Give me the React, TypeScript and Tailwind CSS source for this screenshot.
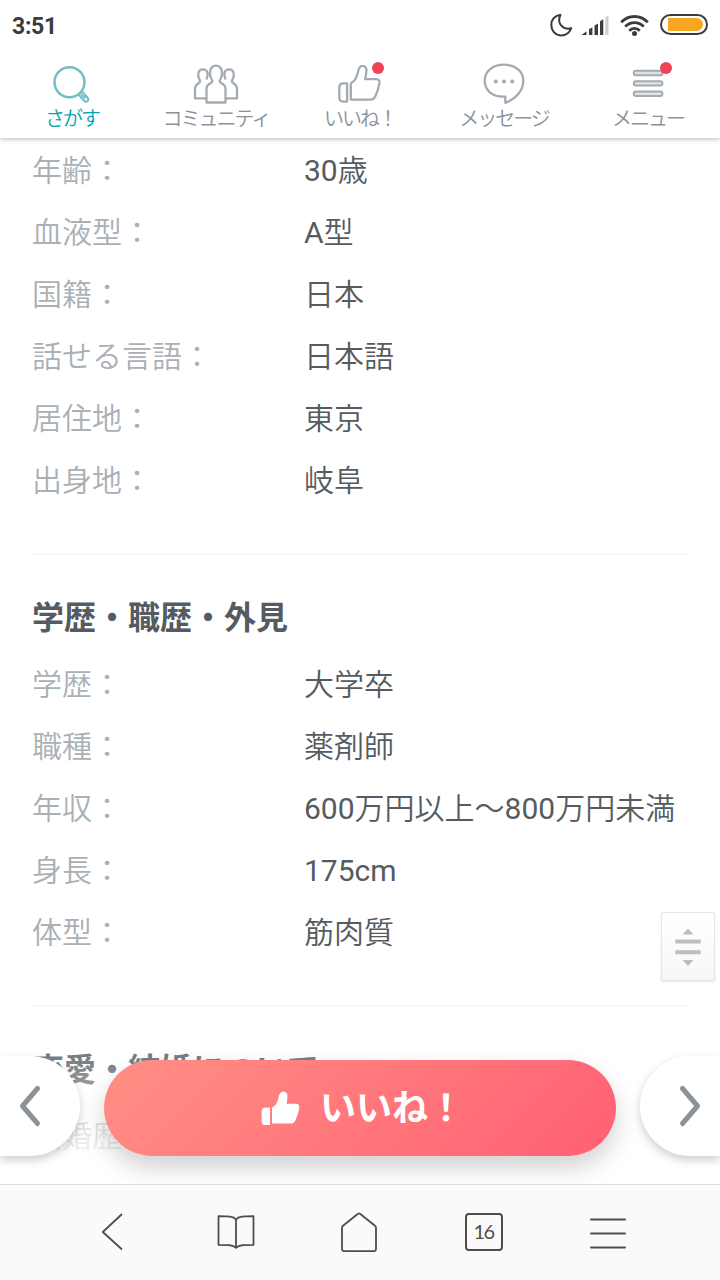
import type { ReactNode } from "react";

const basicRows = [
  { label: "年齢：", value: "30歳" },
  { label: "血液型：", value: "A型" },
  { label: "国籍：", value: "日本" },
  { label: "話せる言語：", value: "日本語" },
  { label: "居住地：", value: "東京" },
  { label: "出身地：", value: "岐阜" },
];

const careerRows = [
  { label: "学歴：", value: "大学卒" },
  { label: "職種：", value: "薬剤師" },
  { label: "年収：", value: "600万円以上〜800万円未満" },
  { label: "身長：", value: "175cm" },
  { label: "体型：", value: "筋肉質" },
];

const HAND =
  "M14.8 39.6V24.2c0-1.4.8-1.8 2-2.4 2.6-1.6 4-5 5-9.4.7-3.8 1.4-6.6 4.6-6.6 3 0 4.4 2.4 4 5.8l-1.2 7.600h11c2.800 0 3.600 1.600 3.200 4.200-.7 4.600-2.200 9-4.200 13.200-1 2.200-2 3-4.200 3z";
const CUFF = "M7.400 23.400h3.700v18.200H7.400c-2.600 0-4.100-1.400-4.100-4v-10.200c0-2.600 1.500-4 4.100-4z";

const StatusBar = () => {
  return (
    <div className="flex h-[52px] items-center justify-between pr-3 pl-3 text-[#3c3c3c]">
      <span className="text-[23px] leading-none font-bold tracking-[-0.3px]">3:51</span>
      <div className="flex items-center pb-[3px]">
        <svg className="h-6 w-6" viewBox="0 0 24 24" fill="none">
          <path
            d="M11.500 1.800C6 2.400 2.300 6.400 2.300 11.800c0 6 4.200 10.700 10 10.700 4.600 0 8.200-2.800 10-7.300-8 2.300-15-4.500-10.800-13.400z"
            stroke="currentColor"
            strokeWidth="2"
            strokeLinejoin="round"
          />
        </svg>
        <svg className="ml-2 h-6 w-[28px]" viewBox="0 0 28 24" fill="currentColor">
          <path d="M.5 22l5-3.800v3.800zM8 16.200l3.400-2V22H8zM13.500 12.500l3.500-2V22h-3.500zM19 8.300l3.300-2V22H19z" />
          <path d="M24.300 4.200L27.500 2v20h-3.200z" fill="#cfcfcf" />
        </svg>
        <svg className="ml-[11px] h-6 w-[29px]" viewBox="0 0 29 24" fill="none">
          <g stroke="currentColor" strokeWidth="2.800">
            <path d="M1.200 9.200C8.800 1.600 20.200 1.600 27.800 9.200" />
            <path d="M5.200 13.600c5.300-5.300 13.300-5.300 18.600 0" />
            <path d="M9.200 17.700c3-3 7.600-3 10.600 0" />
          </g>
          <circle cx="14.500" cy="20.600" r="2.500" fill="currentColor" />
        </svg>
        <div className="ml-[11px] flex h-[21px] w-12 items-center rounded-full border-2 border-[#3c3c3c] pl-1.5">
          <div className="h-[13px] w-[35px] rounded-l-[2px] rounded-r-full bg-[#f6a623]" />
        </div>
      </div>
    </div>
  );
};

type NavItemProps = {
  label: string;
  active?: boolean;
  badge?: boolean;
  children: ReactNode;
};

const NavItem = ({ label, active, badge, children }: NavItemProps) => {
  return (
    <button
      className={`relative flex w-36 flex-col items-center pt-2 ${active ? "text-[#00a5b4]" : "text-[#8b9299]"}`}
    >
      <svg
        className={`h-[46px] w-12 ${active ? "text-[#70bfc6]" : "text-[#a3abb2]"}`}
        viewBox="0 0 48 46"
        fill="none"
        stroke="currentColor"
        strokeWidth="2.300"
        strokeLinejoin="round"
      >
        {children}
      </svg>
      {badge && <span className="absolute top-[10px] left-[84px] h-3 w-3 rounded-full bg-[#ee4456]" />}
      <span className="mt-px text-[20px] leading-6 font-[350] tracking-[-2px] whitespace-nowrap">{label}</span>
    </button>
  );
};

const Header = () => {
  return (
    <header className="relative z-10 h-[138px] shrink-0 bg-white shadow-[0_1px_5px_rgba(0,0,0,0.3)]">
      <StatusBar />
      <nav className="flex h-[86px]">
        <NavItem label="さがす" active>
          <circle cx="21.500" cy="22.200" r="15" strokeWidth="2.500" />
          <path d="M30.800 34.800l5.400 6c2.400 2.200 5.400-.6 3.400-3.200l-5.400-6zM33.500 34.500l4 4" strokeWidth="2" />
        </NavItem>
        <NavItem label="コミュニティ">
          <path d="M14.500 38.300H3V29c0-3 1-4 2.500-5s3.500-1.600 2.300-4C5.500 17 5 9.300 11 9.300c5.600 0 5.500 6.700 3.300 10.200" />
          <path d="M33.500 38.300H45V29c0-3-1-4-2.500-5s-3.500-1.600-2.300-4C42.500 17 43 9.300 37 9.300c-5.600 0-5.500 6.700-3.300 10.200" />
          <path d="M14.500 42.500V29c0-3.500 1.500-4.500 3.500-5.500 2.200-1 3-2 1.500-4.500C17 15 17.200 5.700 24 5.700S31 15 28.500 19c-1.500 2.500-.7 3.500 1.500 4.500 2 1 3.500 2 3.500 5.500v13.500z" />
        </NavItem>
        <NavItem label="いいね！" badge>
          <path d={CUFF} />
          <path d={HAND} />
        </NavItem>
        <NavItem label="メッセージ">
          <path d="M25.300 36.600C12.500 37.300 4.700 30.500 4.700 20.500 4.700 11 13 4.700 24 4.700s19.300 6.300 19.300 15.800c0 9-6 18-18 22.300z" />
          <g fill="currentColor" stroke="none">
            <circle cx="15.700" cy="21.500" r="2" />
            <circle cx="24" cy="21.500" r="2" />
            <circle cx="32.300" cy="21.500" r="2" />
          </g>
        </NavItem>
        <NavItem label="メニュー" badge>
          <g fill="#dde2e4" strokeWidth="2">
            <rect x="9.800" y="10.800" width="28.600" height="4.400" rx="2" />
            <rect x="9.800" y="21.200" width="28.600" height="4.400" rx="2" />
            <rect x="9.800" y="31.500" width="28.600" height="4.400" rx="2" />
          </g>
        </NavItem>
      </nav>
    </header>
  );
};

const Row = ({ label, value }: { label: string; value: string }) => {
  return (
    <div className="flex h-[62px] items-center pt-px text-[30px] leading-none">
      <dt className="w-[272px] font-[350] text-[#a9b0b6]">{label}</dt>
      <dd className="whitespace-nowrap text-[#555b60]">{value}</dd>
    </div>
  );
};

const SectionTitle = ({ children }: { children: ReactNode }) => {
  return (
    <h2 className="mt-[42px] h-[100px] border-t-2 border-[#f7f7f7] pt-[39px] font-[Roboto,'Noto_Sans_CJK_JP',sans-serif] text-[32px] leading-[48px] font-bold text-[#555b60]">
      {children}
    </h2>
  );
};

const ScrollHandle = () => {
  return (
    <div className="absolute top-[774px] right-[5px] flex h-[69px] w-[54px] items-center justify-center rounded-[2px] border border-[#e6e6e3] bg-linear-to-b from-white to-[#f7f7f7] shadow-[0_1px_2px_rgba(0,0,0,0.1)]">
      <svg className="h-10 w-7" viewBox="0 0 28 40" fill="#bdbdbd">
        <path d="M8.500 7.500L14 1.500l5.500 6zM8.500 33L14 39l5.500-6z" />
        <path d="M1.300 12.500h25.400v4H1.300zM1.300 23.300h25.400v4H1.300z" />
      </svg>
    </div>
  );
};

const ActionBar = () => {
  return (
    <div className="absolute inset-x-0 bottom-0 flex h-40 justify-between bg-linear-to-b from-white/0 to-white pt-8">
      <button className="flex h-[100px] w-20 items-center rounded-r-[50px] bg-white pl-[18px] shadow-[0_4px_10px_rgba(0,0,0,0.2)]">
        <svg className="h-11 w-6" viewBox="0 0 24 44" fill="none" stroke="#8b939a" strokeWidth="5">
          <path d="M19.500 4.500L4.500 22l15 17.500" strokeLinecap="round" strokeLinejoin="round" />
        </svg>
      </button>
      <button className="mt-1 flex h-24 w-[512px] items-center rounded-full bg-linear-[135deg] from-[#ff8f85] to-[#ff6073] pl-[155px] text-white shadow-[0_12px_24px_rgba(0,0,0,0.18)]">
        <svg className="mb-1 h-[38px] w-[44px]" viewBox="0 0 48 42" fill="currentColor">
          <path d={CUFF} stroke="currentColor" strokeWidth="1.500" />
          <path d={HAND} stroke="currentColor" strokeWidth="1.500" />
        </svg>
        <span className="mt-0.5 ml-[17px] font-[Roboto,'Noto_Sans_CJK_JP',sans-serif] text-[36px] leading-none font-bold">
          いいね！
        </span>
      </button>
      <button className="flex h-[100px] w-20 items-center justify-end rounded-l-[50px] bg-white pr-[18px] shadow-[0_4px_10px_rgba(0,0,0,0.2)]">
        <svg className="h-11 w-6" viewBox="0 0 24 44" fill="none" stroke="#8b939a" strokeWidth="5">
          <path d="M4.500 4.500l15 17.500-15 17.500" strokeLinecap="round" strokeLinejoin="round" />
        </svg>
      </button>
    </div>
  );
};

const BrowserBar = () => {
  return (
    <footer className="grid h-24 shrink-0 grid-cols-5 place-items-center border-t border-[#dcdcdc] bg-[#fafafa] px-[50px] pb-px text-[#524c4b]">
      <svg className="h-10 w-10" viewBox="0 0 40 40" fill="none" stroke="currentColor" strokeWidth="1.800">
        <path d="M29.500 2.500L10.800 20l18.700 17" strokeLinecap="round" strokeLinejoin="round" />
      </svg>
      <svg className="h-10 w-10" viewBox="0 0 40 40" fill="none" stroke="currentColor" strokeWidth="1.800">
        <path
          d="M20 7.500c-2.500-3-7-3.300-17.500-3.300v28.600c10 0 14.500.2 17.500 3 3-2.800 7.500-3 17.500-3V4.200C27 4.200 22.500 4.500 20 7.500zM20 7.500v28"
          strokeLinejoin="round"
        />
      </svg>
      <svg className="h-10 w-10" viewBox="0 0 40 40" fill="none" stroke="currentColor" strokeWidth="1.800">
        <path
          d="M2 16.500c0-1 .3-1.600 1-2.200L18 2.300c.8-.7 1.200-.7 2 0l15 12c.8.6 1 1.200 1 2.200v21c0 1.500-.8 2.200-2.200 2.200H4.200C2.800 39.700 2 39 2 37.500z"
          strokeLinejoin="round"
          transform="translate(0 -.5)"
        />
      </svg>
      <div className="flex h-[38px] w-[38px] items-center justify-center rounded-[4px] border-2 border-[#524c4b] pr-px pb-[3px] font-[Lato,sans-serif] text-[20px] leading-none tracking-[-1.5px]">
        16
      </div>
      <svg className="h-10 w-10" viewBox="0 0 40 40" fill="none" stroke="currentColor" strokeWidth="2">
        <path d="M3 7.500h34M3 21.500h34M3 35.500h34" strokeLinecap="round" />
      </svg>
    </footer>
  );
};

const App = () => {
  return (
    <div
      lang="ja"
      className="flex h-[1280px] w-[720px] flex-col overflow-hidden bg-white font-[Roboto,'Noto_Sans_CJK_JP_DemiLight','Noto_Sans_CJK_JP',sans-serif]"
    >
      <Header />
      <main className="relative flex-1 overflow-hidden bg-white">
        <div className="px-8 pt-px">
          <dl>
            {basicRows.map((row) => (
              <Row key={row.label} {...row} />
            ))}
          </dl>
          <SectionTitle>学歴・職歴・外見</SectionTitle>
          <dl>
            {careerRows.map((row) => (
              <Row key={row.label} {...row} />
            ))}
          </dl>
          <SectionTitle>恋愛・結婚について</SectionTitle>
          <dl>
            <Row label="結婚歴：" value="" />
          </dl>
        </div>
        <ScrollHandle />
        <ActionBar />
      </main>
      <BrowserBar />
    </div>
  );
};

export default App;
